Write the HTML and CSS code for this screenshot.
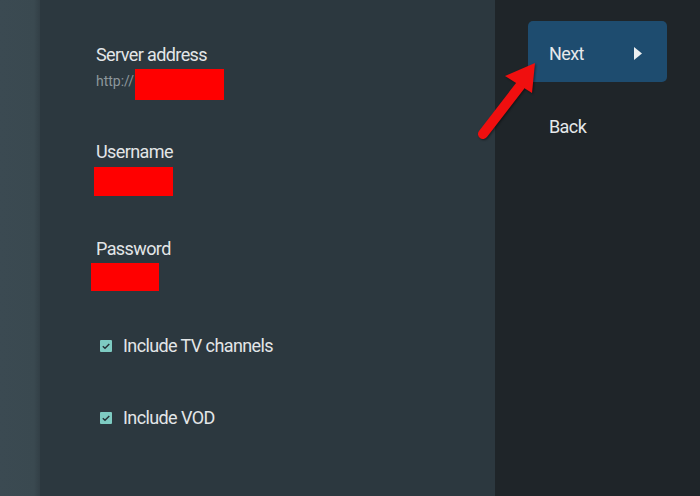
FILE: index.html
```html
<!DOCTYPE html>
<html lang="en">
<head>
    <meta charset="UTF-8">
    <title>Add Provider</title>
    <link rel="stylesheet" href="styles.css">
</head>
<body>

<div class="screen">
    <div class="rail"></div>

    <div class="form">
        <div class="field">
            <div class="label">Server address</div>
            <div class="value">
                <span class="hint">http://</span>
                <span class="redact redact-server"></span>
            </div>
        </div>

        <div class="field">
            <div class="label">Username</div>
            <div class="value">
                <span class="redact redact-user"></span>
            </div>
        </div>

        <div class="field">
            <div class="label">Password</div>
            <div class="value">
                <span class="redact redact-pass"></span>
            </div>
        </div>

        <label class="check">
            <span class="box">
                <svg width="12" height="12" viewBox="0 0 12 12"><path d="M2.8 6.2 L5 8.3 L9.3 3.9" fill="none" stroke="#263238" stroke-width="1.4"/></svg>
            </span>
            Include TV channels
        </label>

        <label class="check">
            <span class="box">
                <svg width="12" height="12" viewBox="0 0 12 12"><path d="M2.8 6.2 L5 8.3 L9.3 3.9" fill="none" stroke="#263238" stroke-width="1.4"/></svg>
            </span>
            Include VOD
        </label>
    </div>

    <div class="actions">
        <div class="btn btn-primary">
            <span>Next</span>
            <svg width="8" height="13" viewBox="0 0 8 13"><polygon points="0,0 8,6.5 0,13" fill="#eceff1"/></svg>
        </div>
        <div class="btn btn-back">Back</div>
    </div>

    <!-- annotation arrow pointing at Next -->
    <svg class="pointer" width="80" height="90" viewBox="0 0 80 90">
        <line x1="13" y1="79" x2="50" y2="31" stroke="#f00f0f" stroke-width="10" stroke-linecap="round"/>
        <polygon points="65,8 35,21 62,38" fill="#f00f0f"/>
    </svg>
</div>

</body>
</html>
```

FILE: styles.css
```css
* {
    box-sizing: border-box;
}

body {
    margin: 0;
    font-family: Roboto, "Noto Sans", sans-serif;
    color: #e3e6e8;
    background: #2b373e;
}

.screen {
    position: relative;
    display: flex;
    width: 700px;
    height: 496px;
    overflow: hidden;
}

.rail {
    width: 40px;
    background: linear-gradient(90deg, #3b4a52 0%, #3a4950 85%, #323f46 100%);
}

.form {
    width: 455px;
    padding: 44px 0 0 56px;
    background: #2c383f;
}

.field {
    height: 97px;
}

.label {
    font-size: 18px;
    line-height: 21px;
    letter-spacing: -0.6px;
}

.value {
    display: flex;
    align-items: flex-start;
    margin-top: 4px;
}

.hint {
    font-size: 14px;
    line-height: 24px;
    color: #8d979c;
}

.redact {
    display: inline-block;
    background: #ff0000;
}

.redact-server {
    width: 89px;
    height: 31px;
    margin-left: 1px;
}

.redact-user {
    width: 79px;
    height: 29px;
    margin-left: -2px;
    margin-top: 1px;
}

.redact-pass {
    width: 68px;
    height: 28px;
    margin-left: -5px;
}

.check {
    display: flex;
    align-items: center;
    height: 21px;
    margin: 0 0 51px 4px;
    font-size: 18px;
    line-height: 21px;
    letter-spacing: -0.6px;
}

.box {
    display: flex;
    width: 12px;
    height: 12px;
    margin-right: 11px;
    background: #7ecbc2;
    border-radius: 1px;
}

.actions {
    width: 205px;
    padding: 21px 33px 0 33px;
    background: #1f2529;
}

.btn {
    display: flex;
    align-items: center;
    justify-content: space-between;
    height: 61px;
    padding: 0 25px 0 21px;
    font-size: 18px;
    letter-spacing: -0.6px;
    color: #e6e9eb;
}

.btn-primary {
    background: #1e4c6f;
    border-radius: 5px;
    padding-top: 4px;
}

.btn-back {
    margin-top: 14px;
}

.pointer {
    position: absolute;
    left: 470px;
    top: 55px;
    filter: drop-shadow(1px 1px 1px rgba(0,0,0,0.45));
}
```
